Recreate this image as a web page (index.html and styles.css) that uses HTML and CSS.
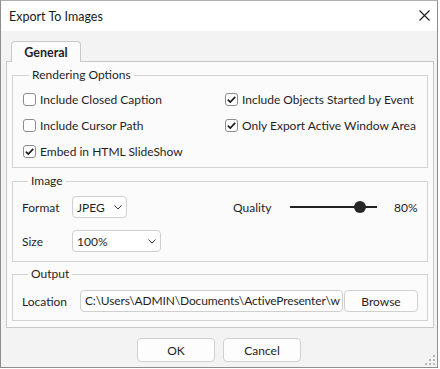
FILE: index.html
```html
<!DOCTYPE html>
<html>
<head>
<meta charset="utf-8">
<link rel="stylesheet" href="styles.css">
</head>
<body>
<div class="window">
  <div class="titlebar">
    <span class="title">Export To Images</span>
    <span class="close"><svg width="11" height="11" viewBox="0 0 11 11"><path d="M0.5 0.5 L10.5 10.5 M10.5 0.5 L0.5 10.5" stroke="#1a1a1a" stroke-width="1.1" fill="none"/></svg></span>
  </div>
  <div class="client">
    <div class="tabs"><div class="tab">General</div></div>
    <div class="panel">
      <fieldset class="group group-render">
        <legend>Rendering Options</legend>
        <div class="check-grid">
          <div class="check"><span class="box"></span><span>Include Closed Caption</span></div>
          <div class="check"><span class="box"><svg width="13" height="13" viewBox="0 0 13 13"><path d="M2.8 6.6 L5.3 9.1 L10.2 3.9" stroke="#1a1a1a" stroke-width="1.6" fill="none"/></svg></span><span>Include Objects Started by Event</span></div>
          <div class="check"><span class="box"></span><span>Include Cursor Path</span></div>
          <div class="check"><span class="box"><svg width="13" height="13" viewBox="0 0 13 13"><path d="M2.8 6.6 L5.3 9.1 L10.2 3.9" stroke="#1a1a1a" stroke-width="1.6" fill="none"/></svg></span><span>Only Export Active Window Area</span></div>
          <div class="check"><span class="box"><svg width="13" height="13" viewBox="0 0 13 13"><path d="M2.8 6.6 L5.3 9.1 L10.2 3.9" stroke="#1a1a1a" stroke-width="1.6" fill="none"/></svg></span><span>Embed in HTML SlideShow</span></div>
        </div>
      </fieldset>
      <fieldset class="group group-image">
        <legend>Image</legend>
        <div class="image-grid">
          <span class="lbl">Format</span>
          <div class="sel-cell"><div class="select sel-format"><span>JPEG</span><svg width="8" height="5" viewBox="0 0 8 5"><path d="M0.5 0.5 L4 4 L7.5 0.5" stroke="#333" stroke-width="1" fill="none"/></svg></div></div>
          <span class="lbl quality-lbl">Quality</span>
          <div class="slider"><div class="track"><span class="thumb" style="left:80%"></span></div></div>
          <span class="pct">80%</span>
          <span class="lbl">Size</span>
          <div class="sel-cell"><div class="select sel-size"><span>100%</span><svg width="8" height="5" viewBox="0 0 8 5"><path d="M0.5 0.5 L4 4 L7.5 0.5" stroke="#333" stroke-width="1" fill="none"/></svg></div></div>
        </div>
      </fieldset>
      <fieldset class="group group-output">
        <legend>Output</legend>
        <div class="output-row">
          <span class="lbl loc-lbl">Location</span>
          <div class="path-input">C:\Users\ADMIN\Documents\ActivePresenter\w</div>
          <div class="btn browse">Browse</div>
        </div>
      </fieldset>
    </div>
    <div class="buttons">
      <div class="btn dlg-btn">OK</div>
      <div class="btn dlg-btn">Cancel</div>
    </div>
  </div>
  <svg class="grip" width="12" height="12" viewBox="0 0 12 12">
    <g fill="#b8b8b8">
      <rect x="9" y="1" width="2" height="2"/>
      <rect x="9" y="5" width="2" height="2"/>
      <rect x="5" y="5" width="2" height="2"/>
      <rect x="9" y="9" width="2" height="2"/>
      <rect x="5" y="9" width="2" height="2"/>
      <rect x="1" y="9" width="2" height="2"/>
    </g>
  </svg>
</div>
</body>
</html>
```
FILE: styles.css
```css
* { box-sizing: border-box; }
html, body { margin: 0; padding: 0; background: #ffffff; }
body {
  font-family: Lato, "Open Sans", sans-serif;
  font-size: 12px;
  color: #1f1f1f;
}
.window {
  position: relative;
  width: 438px;
  height: 368px;
  border: 1px solid #8e8e8e;
  border-top-color: #b0b0b0;
  background: #f3f3f3;
  display: flex;
  flex-direction: column;
}
.titlebar {
  height: 30px;
  background: #ffffff;
  display: flex;
  align-items: center;
  justify-content: space-between;
  padding: 0 7px 0 8px;
}
.title { font-size: 12.5px; color: #1a1a1a; }
.close { display: flex; width: 11px; height: 11px; margin-top: -1px; }
.client {
  flex: 1;
  padding: 10px 0 0 5px;
  display: flex;
  flex-direction: column;
}
.tabs { display: flex; padding-left: 5px; }
.tab {
  position: relative;
  z-index: 1;
  width: 70px;
  height: 21px;
  margin-bottom: -1px;
  border: 1px solid #c9c9c9;
  border-bottom: none;
  border-radius: 4px 4px 0 0;
  background: #fbfbfb;
  font-weight: bold;
  font-size: 12.5px;
  display: flex;
  align-items: center;
  justify-content: center;
  padding-top: 1px;
}
.panel {
  width: 428px;
  border: 1px solid #c9c9c9;
  background: #fbfbfb;
  padding: 5px 5px 6px 5px;
  display: flex;
  flex-direction: column;
}
.group {
  margin: 0;
  min-width: 0;
  border: 1px solid #d3d3d3;
  padding: 0;
}
.group legend {
  margin-left: 6px;
  padding: 0 3px;
  line-height: 16px;
  font-size: 12px;
}
.group-render { padding: 6px 0 6px 10px; }
.group-image { margin-top: 5px; padding: 7px 0 9px 9px; }
.group-output { margin-top: 4px; padding: 8px 9px 8px 9px; }

.check-grid {
  display: grid;
  grid-template-columns: 202px 1fr;
  grid-auto-rows: 20px;
  row-gap: 6px;
}
.check { display: flex; align-items: center; gap: 4px; }
.box {
  width: 13px;
  height: 13px;
  border: 1px solid #8d8d8d;
  border-radius: 3px;
  background: #ffffff;
  display: flex;
  align-items: center;
  justify-content: center;
  flex: none;
}
.box svg { flex: none; }

.image-grid {
  display: grid;
  grid-template-columns: 50px 161px 57px 88px auto;
  grid-template-rows: 22px 22px;
  row-gap: 12px;
  align-items: center;
}
.sel-cell { display: flex; }
.select {
  height: 22px;
  border: 1px solid #cfcfcf;
  border-radius: 4px;
  background: #ffffff;
  display: flex;
  align-items: center;
  justify-content: space-between;
  padding: 0 4px 0 4px;
}
.sel-format { width: 55px; }
.sel-size { width: 89px; }
.slider { height: 22px; display: flex; align-items: center; }
.track {
  position: relative;
  width: 87px;
  height: 2px;
  background: #222222;
}
.thumb {
  position: absolute;
  top: -5px;
  width: 12px;
  height: 12px;
  margin-left: -6px;
  border-radius: 50%;
  background: #262626;
}
.pct { padding-left: 16px; }

.output-row { display: flex; align-items: center; height: 22px; }
.loc-lbl { width: 58px; flex: none; }
.path-input {
  width: 263px;
  height: 22px;
  border: 1px solid #cfcfcf;
  border-radius: 4px;
  background: #ffffff;
  padding: 0 0 0 4px;
  line-height: 20px;
  white-space: nowrap;
  overflow: hidden;
  letter-spacing: -0.15px;
  flex: none;
}
.btn {
  border: 1px solid #d0d0d0;
  border-radius: 4px;
  background: #fdfdfd;
  display: flex;
  align-items: center;
  justify-content: center;
}
.browse { width: 74px; height: 22px; margin-left: 1px; }
.buttons {
  display: flex;
  justify-content: center;
  gap: 8px;
  margin-top: 10px;
  margin-left: -5px;
}
.dlg-btn { width: 78px; height: 24px; }
.grip { position: absolute; right: 1px; bottom: 1px; }
```
